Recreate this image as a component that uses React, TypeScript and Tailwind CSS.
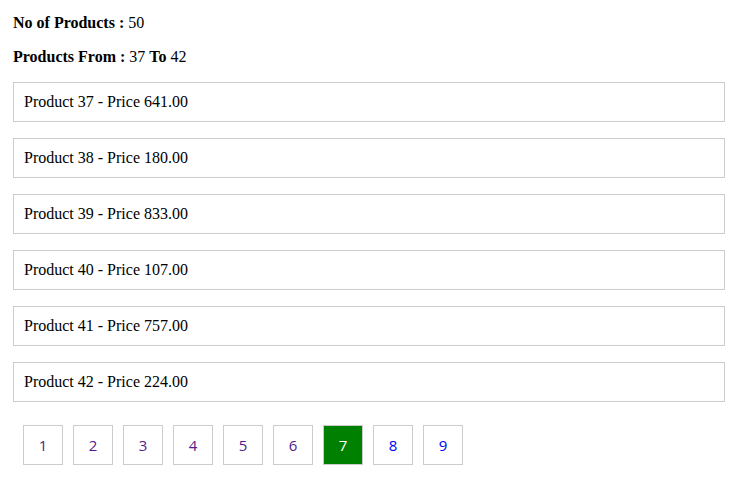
const products = [
  { id: 37, price: "641.00" },
  { id: 38, price: "180.00" },
  { id: 39, price: "833.00" },
  { id: 40, price: "107.00" },
  { id: 41, price: "757.00" },
  { id: 42, price: "224.00" },
];

const pages = [1, 2, 3, 4, 5, 6, 7, 8, 9];
const current = 7;

export default function App() {
  return (
    <div className="pl-[13px] pr-[12px] pt-[14px] pb-[20px] bg-white text-black font-['Liberation_Serif',serif] text-[16px] leading-[18px]">
      <p>
        <b>No of Products :</b> 50
      </p>
      <p className="mt-[16px]">
        <b>Products From :</b> 37 <b>To</b> 42
      </p>
      <div className="mt-[16px] flex flex-col gap-[16px]">
        {products.map((p) => (
          <div key={p.id} className="border border-[#cccccc] px-[10px] py-[10px]">
            Product {p.id} - Price {p.price}
          </div>
        ))}
      </div>
      <ul className="mt-[23px] pl-[10px] flex gap-[10px]">
        {pages.map((n) => (
          <li key={n}>
            <a
              className={
                n === current
                  ? "w-[40px] h-[40px] flex items-center justify-center border border-[#cccccc] bg-[#008000] text-white font-['Open_Sans',sans-serif] text-[15px]"
                  : n < current
                  ? "w-[40px] h-[40px] flex items-center justify-center border border-[#cccccc] text-[#551a8b] font-['Open_Sans',sans-serif] text-[15px]"
                  : "w-[40px] h-[40px] flex items-center justify-center border border-[#cccccc] text-[#0000ee] font-['Open_Sans',sans-serif] text-[15px]"
              }
            >
              {n}
            </a>
          </li>
        ))}
      </ul>
    </div>
  );
}
